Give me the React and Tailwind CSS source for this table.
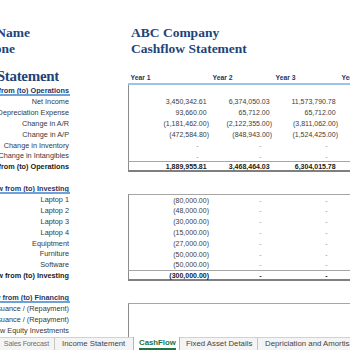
import React from 'react';

const ops = [
  ['Net Income', ['3,450,342.61', '6,374,050.03', '11,573,790.78']],
  ['Depreciation Expense', ['93,660.00', '65,712.00', '65,712.00']],
  ['Change in A/R', ['(1,181,462.00)', '(2,122,355.00)', '(3,811,062.00)']],
  ['Change in A/P', ['(472,584.80)', '(848,943.00)', '(1,524,425.00)']],
  ['Change in Inventory', ['-', '-', '-']],
  ['Change in Intangibles', ['-', '-', '-']],
];

const investing = [
  ['Laptop 1', ['(80,000.00)', '-', '-']],
  ['Laptop 2', ['(48,000.00)', '-', '-']],
  ['Laptop 3', ['(30,000.00)', '-', '-']],
  ['Laptop 4', ['(15,000.00)', '-', '-']],
  ['Equiptment', ['(27,000.00)', '-', '-']],
  ['Furniture', ['(50,000.00)', '-', '-']],
  ['Software', ['(50,000.00)', '-', '-']],
];

const financing = ['Debt Issuance / (Repayment)', 'Loan Issuance / (Repayment)', 'New Equity Investments', '', ''];

function Cell({ v, bold }) {
  if (!v) return <div />;
  const dash = v === '-';
  const neg = v.startsWith('(');
  const tone = bold ? 'font-bold text-[#1a1a1a]' : dash ? 'text-[#8f8f8f]' : 'text-[#3d3d3d]';
  return (
    <div className={`flex items-center justify-end whitespace-nowrap pr-[2px] ${tone}`}>
      <span className={dash ? 'pr-[8px]' : ''}>{v}</span>
      {!neg && <span className="invisible">)</span>}
    </div>
  );
}

function Row({ label = '', kind = 'item', vals = [], box = false, top = false, total = false }) {
  const labelCls =
    kind === 'heading'
      ? 'font-bold text-[#1f3864] border-b-2 border-[#6fa0d8] pt-[2px]'
      : kind === 'total'
      ? 'font-bold text-[#1a1a1a]'
      : 'text-[#383838]';
  return (
    <div className="flex h-[10.9px] shrink-0">
      <div className="w-[128px] shrink-0">
        <div className={`flex h-full w-[70px] items-center justify-end overflow-hidden whitespace-nowrap pr-px text-[7.3px] leading-none ${labelCls}`}>
          {label}
        </div>
      </div>
      <div
        className={`grid flex-1 grid-cols-[82px_63px_66px_1fr] text-[7px] leading-none ${box ? 'border-l border-l-[#8c8c8c]' : ''} ${top ? 'border-t border-t-[#a6a6a6]' : ''} ${total ? 'border-t border-b-2 border-t-[#a6a6a6] border-b-[#7f7f7f]' : ''}`}
      >
        {vals.map((v, i) => (
          <Cell key={i} v={v} bold={total} />
        ))}
      </div>
    </div>
  );
}

function TitleRow({ left, width, right }) {
  return (
    <div className="flex h-4 shrink-0 items-center font-['Liberation_Serif',serif] text-[13.5px] font-bold leading-none text-[#1f4478]">
      <div className="w-[128px] shrink-0">
        <div className="flex justify-end overflow-hidden whitespace-nowrap" style={{ width }}>
          {left}
        </div>
      </div>
      <div className="whitespace-nowrap pl-[3px]">{right}</div>
    </div>
  );
}

export default function App() {
  return (
    <div className="flex h-[350px] w-[350px] flex-col overflow-hidden bg-white font-['Liberation_Sans',Arial,sans-serif]">
      <div className="flex flex-1 flex-col overflow-hidden pt-[25px]">
        <TitleRow left="Company Name" width={30} right="ABC Company" />
        <TitleRow left="Telephone" width={15} right="Cashflow Statement" />
        <div className="h-[11px] shrink-0" />

        {/* year header */}
        <div className="flex h-[17.25px] shrink-0">
          <div className="flex w-[128px] shrink-0 items-center">
            <div className="flex w-[59px] justify-end overflow-hidden whitespace-nowrap font-['Liberation_Serif',serif] text-[15px] font-bold leading-none tracking-[-0.3px] text-[#1f4478]">
              Cashflow Statement
            </div>
          </div>
          <div className="grid flex-1 grid-cols-[82px_63px_66px_1fr] border-b-2 border-[#9dc3e6] pl-px text-[6.8px] font-bold leading-none text-[#1f3864]">
            {['Year 1', 'Year 2', 'Year 3', 'Year 4'].map((y) => (
              <div key={y} className="flex items-end whitespace-nowrap pb-px pl-[1.5px]">
                {y}
              </div>
            ))}
          </div>
        </div>

        <Row label="Cash Flow from (to) Operations" kind="heading" box />
        {ops.map(([l, v]) => (
          <Row key={l} label={l} vals={v} box />
        ))}
        <Row label="Net Cash Flow from (to) Operations" kind="total" vals={['1,889,955.81', '3,468,464.03', '6,304,015.78']} box total />
        <Row />

        <Row label="Cash Flow from (to) Investing" kind="heading" />
        {investing.map(([l, v], i) => (
          <Row key={l} label={l} vals={v} box top={i === 0} />
        ))}
        <Row label="Net Cash Flow from (to) Investing" kind="total" vals={['(300,000.00)', '-', '-']} box total />
        <Row />

        <Row label="Cash Flow from (to) Financing" kind="heading" />
        {financing.map((l, i) => (
          <Row key={i} label={l} box top={i === 0} />
        ))}
      </div>

      {/* sheet tabs */}
      <div className="flex h-[13px] shrink-0 border-t border-[#d2d2d2] bg-[#f4f4f4] text-[7.8px] leading-none text-[#444]">
        <div className="flex w-[54px] shrink-0 items-center justify-end overflow-hidden whitespace-nowrap pr-[5px] text-[7.2px] tracking-[-0.2px] text-[#707070]">
          Sales Forecast
        </div>
        <div className="w-px shrink-0 bg-[#c6c6c6]" />
        <div className="flex w-[78px] shrink-0 items-center whitespace-nowrap pl-[7px]">Income Statement</div>
        <div className="-mt-px flex w-[47px] shrink-0 border-x border-[#b5b5b5] bg-white pl-[5px] pr-[2px]">
          <span className="flex h-full items-center whitespace-nowrap border-b-2 border-[#217346] font-bold text-[#217346]">CashFlow</span>
        </div>
        <div className="flex w-[77px] shrink-0 items-center whitespace-nowrap pl-[6px]">Fixed Asset Details</div>
        <div className="w-px shrink-0 bg-[#c6c6c6]" />
        <div className="flex items-center whitespace-nowrap pl-[7px]">Depriciation and Amortisation</div>
      </div>
    </div>
  );
}
